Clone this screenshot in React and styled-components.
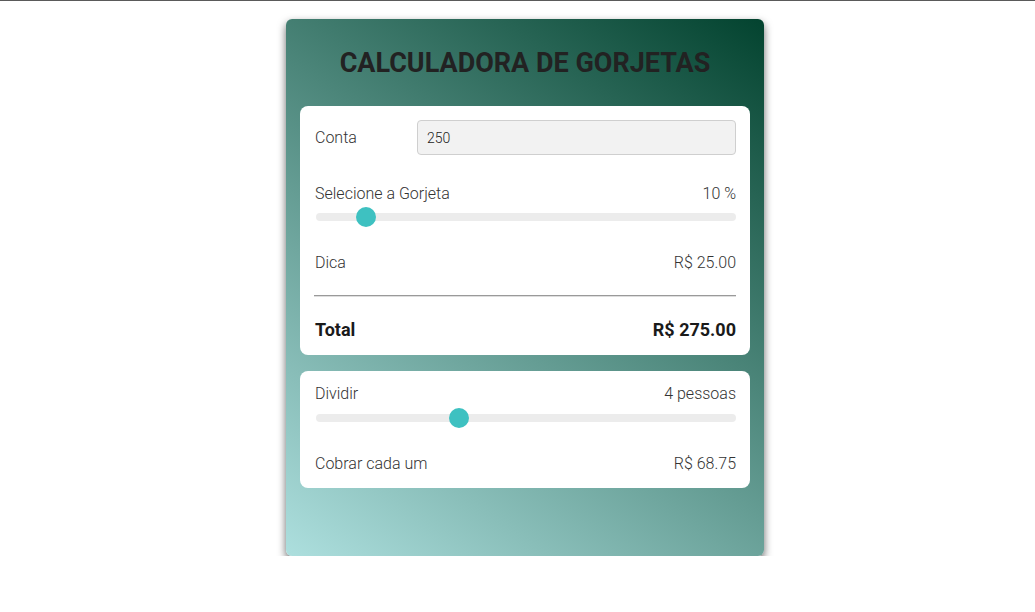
import React, { useState } from 'react';
import styled, { createGlobalStyle } from 'styled-components';

const GlobalStyle = createGlobalStyle`
  * { box-sizing: border-box; }
  body {
    margin: 0;
    border-top: 1px solid #5a5a5a;
    background: #fff;
    font-family: Roboto, "Liberation Sans", sans-serif;
    color: #333;
  }
`;

const Page = styled.div`
  display: flex;
  justify-content: center;
  padding: 18px 0 0 15px;
`;

const Card = styled.div`
  width: 478px;
  height: 537px;
  padding: 14px;
  border-radius: 6px;
  background: linear-gradient(35deg, #addfde 0%, #03432f 100%);
  box-shadow: 0 4px 9px rgba(0, 0, 0, 0.6);
`;

const Title = styled.h1`
  margin: 0;
  padding: 14px 0 27px;
  font-size: 27px;
  line-height: 32px;
  font-weight: 700;
  text-align: center;
  color: #222;
`;

const Panel = styled.div`
  background: #fff;
  border-radius: 8px;
  padding: ${p => p.pad};
  & + & {
    margin-top: 16px;
  }
`;

const Row = styled.div`
  display: flex;
  align-items: center;
  justify-content: space-between;
  margin-top: ${p => p.top || 0}px;
  font-size: ${p => (p.bold ? '18px' : '16px')};
  font-weight: ${p => (p.bold ? 700 : 300)};
  line-height: ${p => (p.bold ? '22px' : '20px')};
  color: ${p => (p.bold ? '#1a1a1a' : '#333')};
`;

const Label = styled.span`
  flex: ${p => (p.fixed ? '0 0 102px' : '0 0 auto')};
`;

const Input = styled.input`
  flex: 1;
  height: 35px;
  padding: 0 9px;
  border: 1px solid #cfcfcf;
  border-radius: 4px;
  background: #f2f2f2;
  font-family: Roboto, "Liberation Sans", sans-serif;
  font-size: 14px;
  font-weight: 300;
  color: #222;
  outline: none;
`;

const SliderWrap = styled.div`
  display: flex;
  align-items: center;
  height: 20px;
  margin-top: ${p => p.top}px;
  padding-left: 1px;
`;

const Range = styled.input.attrs({ type: 'range' })`
  -webkit-appearance: none;
  appearance: none;
  width: 100%;
  height: 8px;
  margin: 0;
  border-radius: 5px;
  background: #ececec;
  outline: none;
  &::-webkit-slider-thumb {
    -webkit-appearance: none;
    appearance: none;
    width: 20px;
    height: 20px;
    border-radius: 50%;
    background: #3ec1c1;
    border: none;
    cursor: pointer;
  }
`;

const Divider = styled.hr`
  margin: 22px 0 0 -1px;
  border: 0;
  height: 1px;
  background: #9a9a9a;
  box-shadow: 0 1px 0 #dedede;
`;

const money = v => `R$ ${v.toFixed(2)}`;

export default function App() {
  const [bill, setBill] = useState('250');
  const [tip, setTip] = useState(10);
  const [people, setPeople] = useState(4);

  const amount = parseFloat(bill) || 0;
  const tipValue = (amount * tip) / 100;
  const total = amount + tipValue;

  return (
    <>
      <GlobalStyle />
      <Page>
        <Card>
          <Title>CALCULADORA DE GORJETAS</Title>
          <Panel pad="14px 14px 14px 15px">
            <Row>
              <Label fixed>Conta</Label>
              <Input value={bill} onChange={e => setBill(e.target.value)} />
            </Row>
            <Row top={29}>
              <Label>Selecione a Gorjeta</Label>
              <span>{tip} %</span>
            </Row>
            <SliderWrap top={3}>
              <Range min={0} max={100} value={tip} onChange={e => setTip(Number(e.target.value))} />
            </SliderWrap>
            <Row top={26}>
              <Label>Dica</Label>
              <span>{money(tipValue)}</span>
            </Row>
            <Divider />
            <Row top={23} bold>
              <Label>Total</Label>
              <span>{money(total)}</span>
            </Row>
          </Panel>
          <Panel pad="13px 14px 14px 15px">
            <Row>
              <Label>Dividir</Label>
              <span>{people} pessoas</span>
            </Row>
            <SliderWrap top={4}>
              <Range min={1} max={10} value={people} onChange={e => setPeople(Number(e.target.value))} />
            </SliderWrap>
            <Row top={26}>
              <Label>Cobrar cada um</Label>
              <span>{money(total / people)}</span>
            </Row>
          </Panel>
        </Card>
      </Page>
    </>
  );
}
